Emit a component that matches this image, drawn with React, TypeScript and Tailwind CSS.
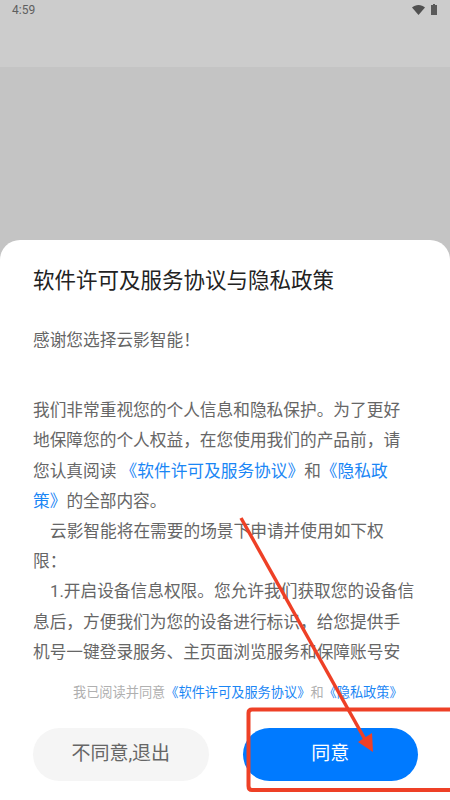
const cjk = "font-['Roboto','Noto_Sans_CJK_SC',sans-serif]";

const StatusBar = () => {
  return (
    <div className="flex h-[67px] bg-[#cccccc] px-3 pt-[1px] items-start justify-between">
      <span className="text-[12px] leading-[18px] text-[#5f5f5f] font-['Roboto',sans-serif]">4:59</span>
      <div className="flex items-center gap-[6px] pr-[1px] pt-[3px]">
        <svg width="13" height="10" viewBox="0 0 13 10">
          <path d="M0 2.6C1.8 1 4 0 6.5 0S11.2 1 13 2.6L6.5 10z" fill="#505050" />
        </svg>
        <svg width="6" height="11" viewBox="0 0 6 11">
          <path d="M2 0h2v1h2v10H0V1h2z" fill="#5a5a5a" />
        </svg>
      </div>
    </div>
  );
};

const Annotation = () => {
  return (
    <svg className="absolute left-0 top-0 pointer-events-none" width="450" height="800" viewBox="0 0 450 800">
      <path d="M450 709.500H252Q248.500 709.500 248.500 713V786Q248.500 790 252 790H450" fill="none" stroke="#ee4026" strokeWidth="4" />
      <path d="M241 518L367 743" fill="none" stroke="#ee4026" strokeWidth="3.500" />
      <path d="M373 752L372 733L358 742z" fill="#ee4026" />
    </svg>
  );
};

const App = () => {
  return (
    <div className={`relative flex flex-col h-[800px] w-[450px] overflow-hidden bg-[#c4c4c4] ${cjk}`}>
      <StatusBar />
      <div className="flex-1" />
      <div className="flex flex-col h-[560px] bg-white rounded-t-[20px] pl-[33px] pr-[32px]">
        <h3 className="mt-[24px] text-[21.500px] leading-[34px] text-[#222222] whitespace-nowrap">软件许可及服务协议与隐私政策</h3>
        <div className="mt-[28px] mr-[3px] h-[340px] overflow-hidden text-[16.700px] leading-[30.200px] text-[#666666]">
          <p>感谢您选择云影智能！</p>
          <p className="mt-[40px]">
            我们非常重视您的个人信息和隐私保护。为了更好地保障您的个人权益，在您使用我们的产品前，请您认真阅读 <span className="text-[#1a86f5]">《软件许可及服务协议》</span>和<span className="text-[#1a86f5]">《隐私政<br />策》</span>的全部内容。
          </p>
          <p className="indent-[17px]">云影智能将在需要的场景下申请并使用如下权限：</p>
          <p className="indent-[17px]">1.开启设备信息权限。您允许我们获取您的设备信息后，方便我们为您的设备进行标识，给您提供手机号一键登录服务、主页面浏览服务和保障账号安全。</p>
        </div>
        <p className="mt-[17px] ml-[40px] text-[13.200px] leading-[20px] text-[#b0b0b0] whitespace-nowrap">
          我已阅读并同意<span className="text-[#1a86f5]">《软件许可及服务协议》</span>和<span className="text-[#1a86f5]">《隐私政策》</span>
        </p>
        <div className="mt-[25px] flex gap-[34px]">
          <button className="h-[53px] w-[176px] rounded-full bg-[#f5f5f5] text-[19px] text-[#666666]">不同意,退出</button>
          <button className="h-[53px] w-[176px] rounded-full bg-[#007aff] text-[19px] text-white">同意</button>
        </div>
      </div>
      <Annotation />
    </div>
  );
};

export default App;
